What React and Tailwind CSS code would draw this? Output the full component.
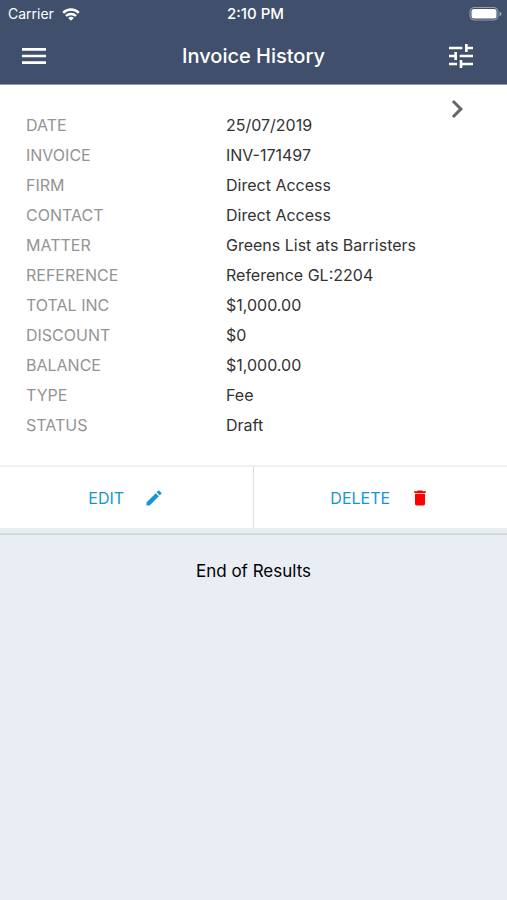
import React from 'react';
import { MdMenu, MdTune, MdChevronRight, MdEdit, MdDelete } from 'react-icons/md';

const invoice = [
  { label: 'DATE', value: '25/07/2019' },
  { label: 'INVOICE', value: 'INV-171497' },
  { label: 'FIRM', value: 'Direct Access' },
  { label: 'CONTACT', value: 'Direct Access' },
  { label: 'MATTER', value: 'Greens List ats Barristers' },
  { label: 'REFERENCE', value: 'Reference GL:2204' },
  { label: 'TOTAL INC', value: '$1,000.00' },
  { label: 'DISCOUNT', value: '$0' },
  { label: 'BALANCE', value: '$1,000.00' },
  { label: 'TYPE', value: 'Fee' },
  { label: 'STATUS', value: 'Draft' },
];

const StatusBar = () => (
  <div className="grid h-7 grid-cols-3 items-center pl-2 pr-1 text-sm">
    <div className="flex items-center gap-2">
      <span>Carrier</span>
      <svg width="18" height="13" viewBox="0 0 18 13" fill="none" stroke="#fff" strokeWidth="2.5" aria-hidden="true">
        <path d="M1.2 4.8a11 11 0 0 1 15.6 0" />
        <path d="M4 8a7 7 0 0 1 10 0" />
        <path d="M9 12.8 6.2 10a4 4 0 0 1 5.6 0z" fill="#fff" stroke="none" />
      </svg>
    </div>
    <span className="text-center text-[15px] font-medium">2:10 PM</span>
    <svg className="justify-self-end" width="34" height="14" viewBox="0 0 34 14" aria-hidden="true">
      <rect x="1" y="0.5" width="28" height="12.5" rx="4" fill="none" stroke="#fff" strokeOpacity="0.45" />
      <rect x="2.5" y="2" width="25" height="9.5" rx="2.5" fill="#fff" />
      <path d="M30.5 5a2 2 0 0 1 0 4z" fill="#fff" fillOpacity="0.5" />
    </svg>
  </div>
);

const App = () => {
  return (
    <div className="min-h-screen bg-[#e9eef5] font-['Inter',sans-serif] text-base text-[#333333]">
      <header className="border-b border-[#8d97a9] bg-[#3f4f6c] text-white">
        <StatusBar />
        <div className="grid h-14 grid-cols-[1fr_auto_1fr] items-center px-[18px]">
          <button type="button" className="justify-self-start" aria-label="Open menu">
            <MdMenu className="h-8 w-8" />
          </button>
          <h1 className="text-xl font-medium">Invoice History</h1>
          <button type="button" className="mr-3 justify-self-end" aria-label="Filter invoices">
            <MdTune className="h-8 w-8" />
          </button>
        </div>
      </header>

      <main>
        <article className="border-b-2 border-[#d3dadd] bg-white">
          <div className="relative px-[26px] py-[25px]">
            <dl className="grid grid-cols-[200px_1fr]">
              {invoice.map((row) => (
                <React.Fragment key={row.label}>
                  <dt className="h-[30px] leading-[30px] text-[#949494]">{row.label}</dt>
                  <dd className="h-[30px] leading-[30px]">{row.value}</dd>
                </React.Fragment>
              ))}
            </dl>
            <button type="button" className="absolute right-8 top-1.5 text-[#666666]" aria-label="View invoice">
              <MdChevronRight className="h-9 w-9" />
            </button>
          </div>

          <div className="grid grid-cols-2 divide-x divide-[#dddddd] border-t-2 border-[#f0f0f0] text-[#1695d3]">
            <button type="button" className="flex h-[61px] items-center justify-center gap-5">
              EDIT
              <MdEdit className="h-5 w-5" aria-hidden="true" />
            </button>
            <button type="button" className="flex h-[61px] items-center justify-center gap-5">
              DELETE
              <MdDelete className="h-5 w-5 text-[#ff0000]" aria-hidden="true" />
            </button>
          </div>
          <div className="h-[5px] bg-[#e9eeee]" />
        </article>

        <p className="pt-6 text-center text-[17px] leading-6 text-black">End of Results</p>
      </main>
    </div>
  );
};

export default App;
